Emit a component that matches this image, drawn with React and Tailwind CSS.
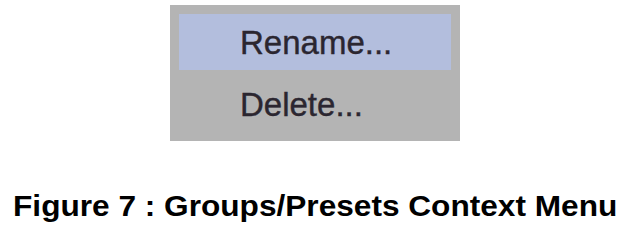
import React from 'react'

const items = [
  { label: 'Rename...', active: true, height: 'h-[56px]', nudge: 'pt-[2px]' },
  { label: 'Delete...', active: false, height: 'h-[66px]', nudge: 'pt-[4px]' },
]

export default function App() {
  return (
    <div className="w-[630px] h-[245px] bg-white flex flex-col items-center pt-[5px]">
      <div className="w-[290px] h-[136px] bg-[#b4b4b4] px-[9px] pt-[9px] flex flex-col">
        {items.map((item) => (
          <div
            key={item.label}
            className={`${item.height} pl-[61px] flex items-center text-[33px] text-[#2b2630] ${item.active ? 'bg-[#b3bedd]' : ''}`}
            style={{ fontFamily: '"Liberation Sans", Arial, sans-serif' }}
          >
            <span className={`${item.nudge} [-webkit-text-stroke:0.4px_#2b2630]`}>{item.label}</span>
          </div>
        ))}
      </div>
      <div
        className="mt-[51px] text-[29px] font-bold text-black leading-none scale-x-[1.09] whitespace-nowrap"
        style={{ fontFamily: '"Liberation Sans", Arial, sans-serif' }}
      >
        Figure 7 : Groups/Presets Context Menu
      </div>
    </div>
  )
}
